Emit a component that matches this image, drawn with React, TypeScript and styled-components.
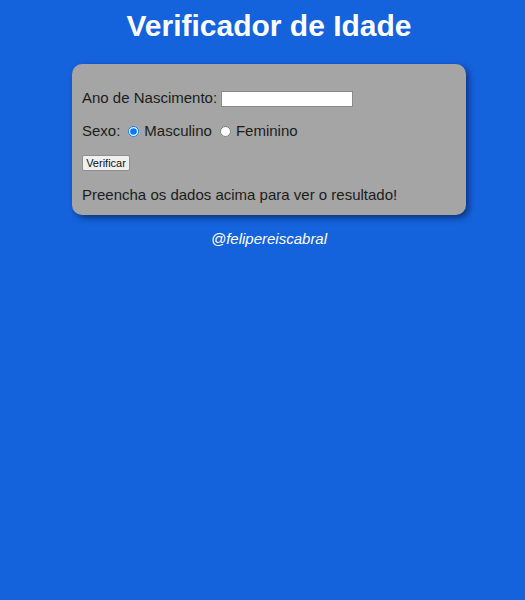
import React from "react";
import styled, { createGlobalStyle } from "styled-components";

const GlobalStyle = createGlobalStyle`
  html, body {
    margin: 0;
    padding: 0;
  }
  body {
    background: #1462dc;
    font-family: Arial, "Liberation Sans", sans-serif;
    font-size: 15px;
    padding: 8px 0 8px 13px;
  }
`;

const Header = styled.header`
  color: #ffffff;
  text-align: center;
`;

const Title = styled.h1`
  font-size: 30px;
  font-weight: bold;
  margin: 0 0 20px;
  line-height: 36px;
`;

const Section = styled.section`
  background: #a5a5a5;
  width: 394px;
  box-sizing: border-box;
  margin: 0 auto;
  padding: 10px 10px 11px;
  border-radius: 10px;
  box-shadow: 3px 3px 6px rgba(0, 0, 0, 0.45);
  color: #1c1c1c;
`;

const Row = styled.p`
  margin: 15px 0;
  display: flex;
  align-items: center;
  line-height: 18px;
`;

const YearInput = styled.input`
  width: 132px;
  height: 16px;
  box-sizing: border-box;
  margin: 1px 0 0 4px;
  border: 1px solid #8a8a8a;
  background: #ffffff;
  padding: 0 2px;
  font-size: 12px;
`;

const Radio = styled.input`
  width: 11px;
  height: 11px;
  margin: 1px 5px 0 8px;
  accent-color: #0075ff;
`;

const Label = styled.label`
  cursor: pointer;
`;

const Button = styled.input`
  font-family: Arial, "Liberation Sans", sans-serif;
  font-size: 11px;
  height: 16px;
  width: 48px;
  padding: 0;
  margin: 0;
  box-sizing: border-box;
  background: #f0f0f0;
  border: 1px solid #8f8f8f;
  border-radius: 2px;
  color: #111;
  line-height: 12px;
`;

const Result = styled.div`
  line-height: 18px;
`;

const Footer = styled.footer`
  color: #ffffff;
  font-style: italic;
  text-align: center;
  margin-top: 15px;
`;

export default function App() {
  return (
    <>
      <GlobalStyle />
      <Header>
        <Title>Verificador de Idade</Title>
      </Header>
      <Section>
        <Row>
          Ano de Nascimento:
          <YearInput type="number" />
        </Row>
        <Row>
          Sexo:
          <Radio type="radio" name="sex" id="masc" defaultChecked />
          <Label htmlFor="masc">Masculino</Label>
          <Radio type="radio" name="sex" id="fem" />
          <Label htmlFor="fem">Feminino</Label>
        </Row>
        <Row>
          <Button type="button" value="Verificar" />
        </Row>
        <Result>Preencha os dados acima para ver o resultado!</Result>
      </Section>
      <Footer>@felipereiscabral</Footer>
    </>
  );
}
